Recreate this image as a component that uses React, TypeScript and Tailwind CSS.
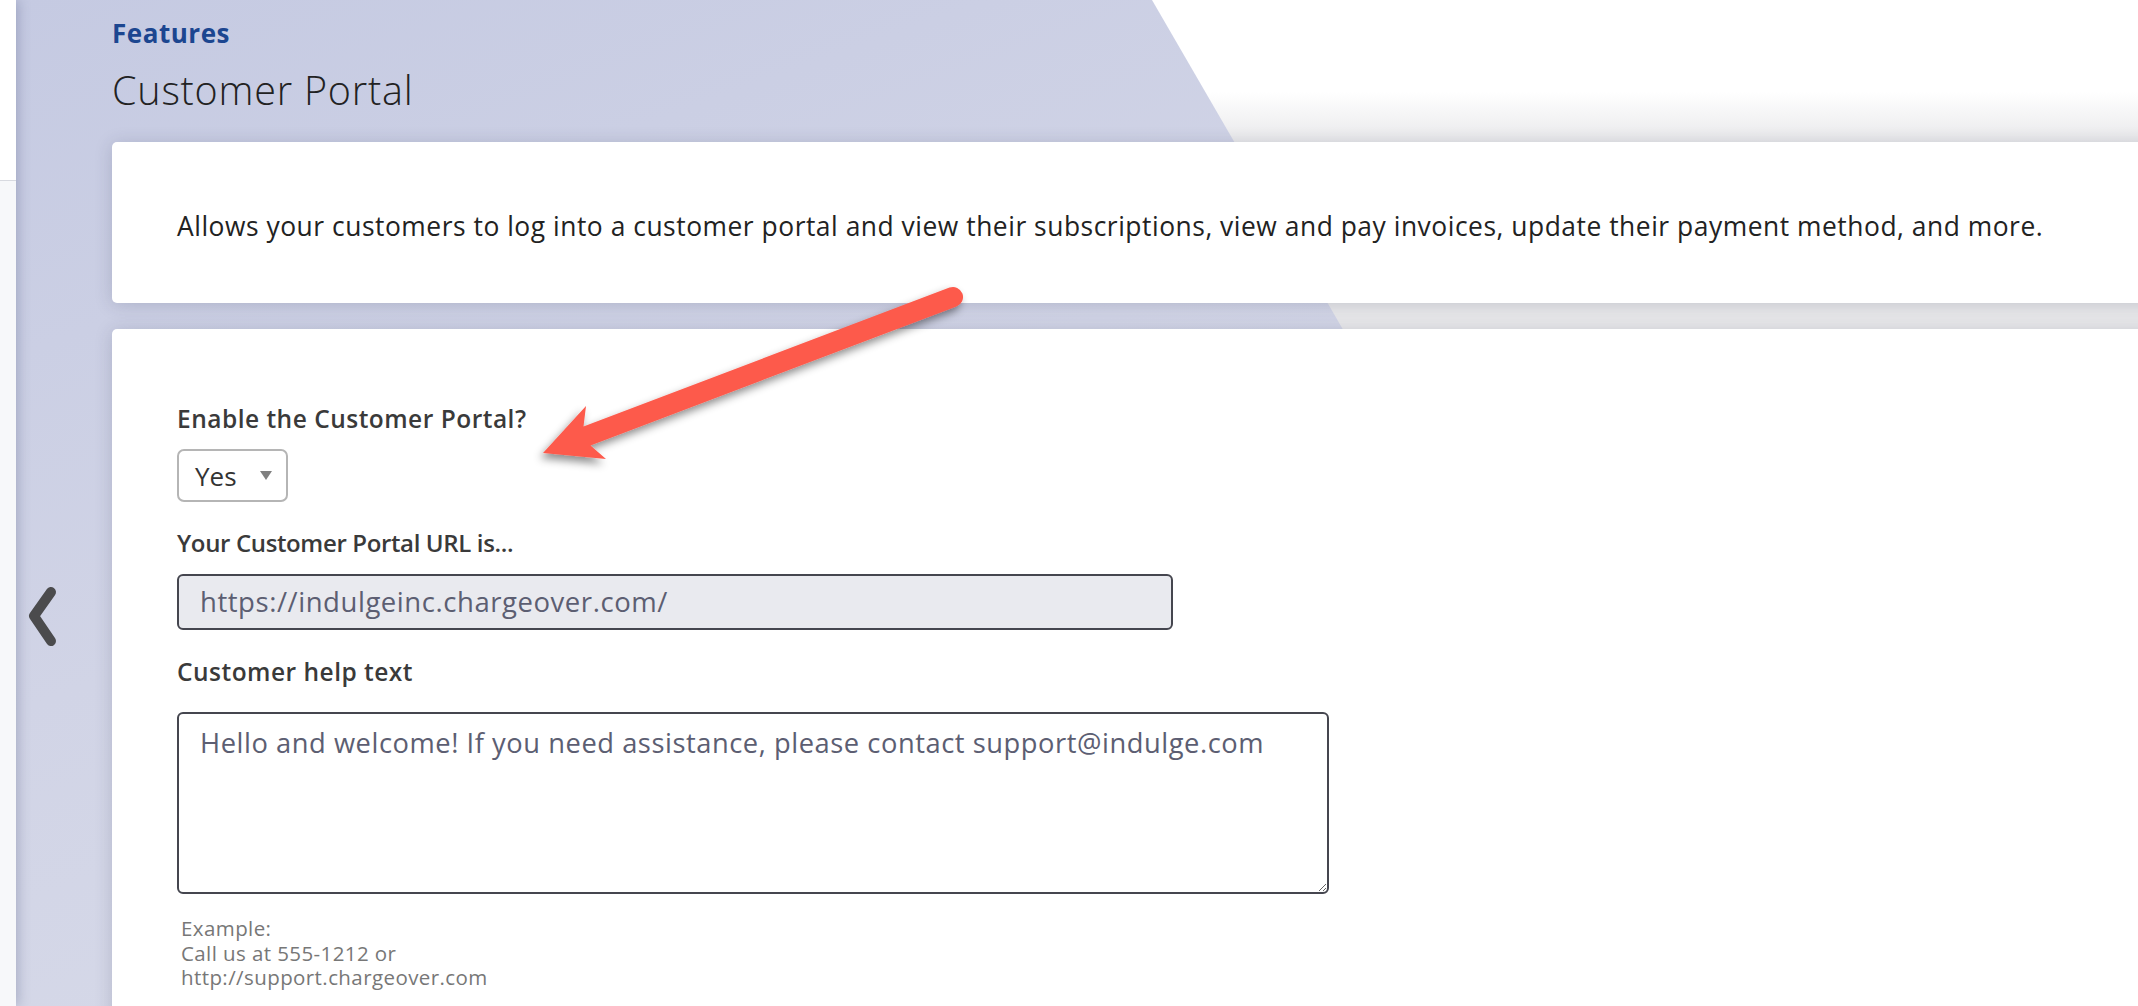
export default function App() {
  return (
    <div className="relative flex h-[1006px] w-full overflow-hidden bg-white font-['Open_Sans',sans-serif]">
      {/* collapsed sidebar */}
      <aside className="relative z-10 flex w-[16px] shrink-0 flex-col shadow-[3px_0_12px_rgba(70,80,120,0.28)]">
        <div className="h-[181px] border-b border-[#d8dae0] bg-white" />
        <div className="flex-1 bg-[#f7f8fa]" />
      </aside>

      <main className="relative flex-1 bg-[#e8e8ea]">
        {/* page backdrop */}
        <div className="absolute inset-x-0 top-0 h-[142px] bg-[linear-gradient(to_bottom,#ffffff_0px,#ffffff_92px,#e9e9eb_142px)]" />
        <div className="absolute inset-0 bg-[linear-gradient(160deg,#c5cae2_0%,#d1d4e6_40%,#dcdfeb_100%)] [clip-path:polygon(0_0,1136px_0,1719px_1006px,0_1006px)]" />

        <div className="relative -mr-10 pl-[96px] pt-[18px]">
          <div className="text-[26px] font-bold leading-[30px] tracking-[0.02em] text-[#1c4690]">Features</div>
          <h1 className="mt-[19px] text-[39.5px] font-light leading-[46px] tracking-[0.02em] text-[#222]">Customer Portal</h1>

          <section className="mt-[29px] flex h-[161px] items-center rounded-[5px] bg-white pl-[65px] pt-[6px] shadow-[0_2px_18px_rgba(40,45,80,0.18)]">
            <p className="text-[26.4px] leading-[30px] tracking-[0.02em] text-[#222]">
              Allows your customers to log into a customer portal and view their subscriptions, view and pay invoices, update their payment method, and more.
            </p>
          </section>

          <section className="mt-[26px] rounded-[5px] bg-white pb-[60px] pl-[65px] pt-[75px] shadow-[0_2px_18px_rgba(40,45,80,0.18)]">
            <label className="block text-[24.5px] font-semibold leading-[30px] tracking-[0.02em] text-[#3a3a3a]">Enable the Customer Portal?</label>
            <div className="mt-[15px] flex h-[53px] w-[111px] items-center justify-between rounded-[7px] border-2 border-[#b5b5b5] pl-[16px] pr-[14px]">
              <span className="text-[26px] leading-[30px] text-[#333]">Yes</span>
              <span className="h-0 w-0 border-x-[6px] border-t-[9px] border-x-transparent border-t-[#808080]" />
            </div>

            <label className="mt-[26px] block text-[24px] font-semibold leading-[30px] tracking-[-0.015em] text-[#3a3a3a]">Your Customer Portal URL is...</label>
            <div className="mt-[16px] flex h-[56px] w-[996px] items-center rounded-[6px] border-2 border-[#45464f] bg-[#e9eaef] pl-[21px] text-[27.5px] tracking-[0.02em] text-[#5c5e72]">
              https://indulgeinc.chargeover.com/
            </div>

            <label className="mt-[27px] block text-[24.5px] font-semibold leading-[30px] tracking-[0.02em] text-[#3a3a3a]">Customer help text</label>
            <textarea
              readOnly
              defaultValue="Hello and welcome! If you need assistance, please contact support@indulge.com"
              className="mt-[25px] block h-[182px] w-[1152px] rounded-[6px] border-2 border-[#45464f] bg-white px-[21px] pt-[14px] text-[27.3px] leading-[30px] tracking-[0.02em] text-[#5c5e72] outline-none"
            />

            <div className="mt-[22px] pl-[4px] text-[20.5px] leading-[24.5px] tracking-[0.02em] text-[#777]">
              Example:
              <br />
              Call us at 555-1212 or
              <br />
              http://support.chargeover.com
            </div>
          </section>
        </div>
      </main>

      {/* sidebar toggle */}
      <svg className="absolute left-[26px] top-[584px] z-20" width="34" height="66" viewBox="0 0 34 66">
        <polyline points="25,8 8,32 25,57" fill="none" stroke="#4b4b4d" strokeWidth="10" strokeLinecap="round" strokeLinejoin="round" />
      </svg>

      {/* annotation arrow */}
      <svg className="pointer-events-none absolute inset-0 z-30" width="2138" height="1006" viewBox="0 0 2138 1006">
        <defs>
          <filter id="arrowShadow" x="-20%" y="-20%" width="140%" height="140%">
            <feDropShadow dx="-3" dy="5" stdDeviation="4" floodColor="#000" floodOpacity="0.45" />
          </filter>
        </defs>
        <path
          d="M543 453 L586 406 L583.5 426.6 L949.5 287.6 A10 10 0 0 1 956.5 306.4 L590.5 445.4 L606 459 Z"
          fill="#fd5a4c"
          filter="url(#arrowShadow)"
        />
      </svg>
    </div>
  );
}
